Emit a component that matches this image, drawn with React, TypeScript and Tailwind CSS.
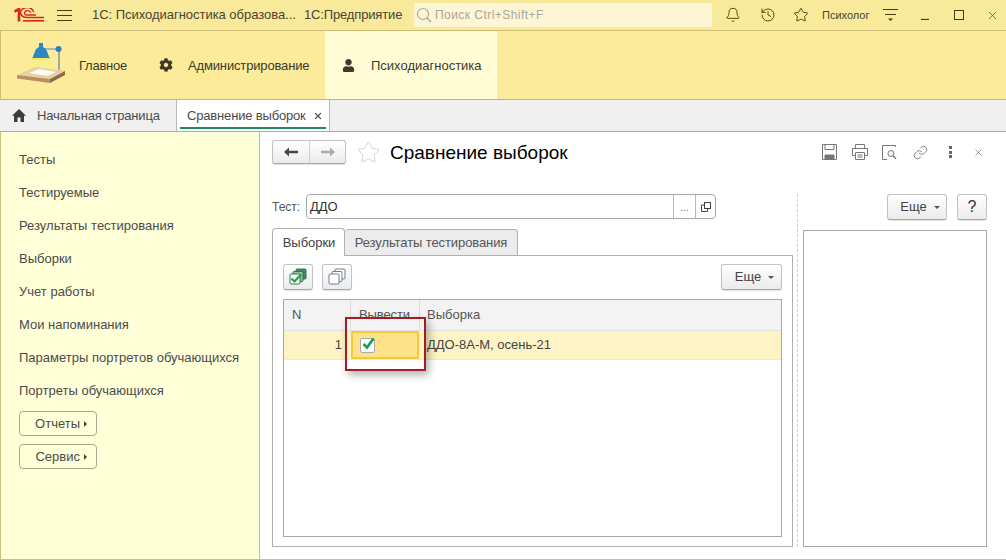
import React from "react";
import { Bell, History, Star, X, Link } from "lucide-react";
import { FaCog, FaUser } from "react-icons/fa";

const Logo = () => (
  <svg width="30" height="14" viewBox="0 0 30 14" fill="none" stroke="#d8261c">
    <path d="M0.5 3.5 L5 1 V13.5" strokeWidth="2.6" />
    <path d="M19.5 4 A6.5 5 0 1 0 13 9.5 H30" strokeWidth="1.5" />
    <path d="M16.5 4.8 A3 2.2 0 1 0 14 7 H22" strokeWidth="1.3" />
    <path d="M9 12.8 H30" strokeWidth="1.6" />
  </svg>
);

const Lamp = () => (
  <svg width="50" height="44" viewBox="0 0 50 44">
    <path d="M16 17 L7 31 L38 30 L33 17 Z" fill="#f8ef8e" />
    <path d="M1 33 L19 25 L49 29 L34 37 Z" fill="#e8cfa6" />
    <path d="M13 31 L23 27 L40 30 L31 34 Z" fill="#fffdf2" />
    <path d="M1 33 L34 37 V41 L1 36.5 Z" fill="#b88f63" />
    <path d="M34 37 L49 29 V33 L34 41 Z" fill="#8e6a48" />
    <path d="M28 7 H41" stroke="#aab6bd" strokeWidth="2" fill="none" />
    <path d="M43 9 V28" stroke="#7f93a0" strokeWidth="1.5" fill="none" />
    <circle cx="42.5" cy="7" r="3" fill="#2f7fb5" />
    <path d="M23 1 h4 v4 l3 2 l4 10 h-18 l4 -10 l3 -2 z" fill="#2f86c4" />
    <path d="M16 16 h18 l-1 2 h-16 z" fill="#f4ea5c" />
  </svg>
);

const MenuLines = () => (
  <svg width="15" height="13" viewBox="0 0 15 13" stroke="#4a3c12" strokeWidth="1">
    <path d="M0 1.5H15M0 6.5H15M0 11.5H15" />
  </svg>
);

const SideItem = ({ t }: { t: string }) => (
  <div className="h-[33px] flex items-center text-[13px] text-[#4b4b4b]">{t}</div>
);

const SideBtn = ({ t }: { t: string }) => (
  <div className="h-[25px] w-[78px] mb-[8px] rounded-[4px] border border-[#aaa88c] flex items-center justify-end pr-[9px] gap-[4px] text-[13px] text-[#4b4b4b]">
    <span>{t}</span>
    <span className="w-0 h-0 border-y-[3px] border-y-transparent border-l-[3px] border-l-[#444]" />
  </div>
);

const GrayBtn = ({ className, children }: { className: string; children: React.ReactNode }) => (
  <div className={"flex items-center justify-center rounded-[3px] border border-[#c2c2c2] border-b-[#a8a8a8] bg-gradient-to-b from-white to-[#ebebeb] shadow-[0_1px_1px_rgba(0,0,0,0.12)] " + className}>
    {children}
  </div>
);

const More = ({ className }: { className: string }) => (
  <GrayBtn className={"gap-[7px] pl-[6px] text-[13px] text-[#444] " + className}>
    <span>Еще</span>
    <span className="w-0 h-0 border-x-[3px] border-x-transparent border-t-[3px] border-t-[#555]" />
  </GrayBtn>
);

const CopyIcon = ({ green }: { green?: boolean }) => (
  <svg width="20" height="18" viewBox="0 0 20 18" fill="none">
    <rect x="8" y="1" width="10" height="10" rx="1" fill={green ? "#3d8a5a" : "#fff"} stroke={green ? "#3b7355" : "#6c7f8e"} />
    <rect x="5" y="3.5" width="10" height="10" rx="1" fill={green ? "#8cc29e" : "#fff"} stroke={green ? "#3b7355" : "#6c7f8e"} />
    <rect x="2" y="6" width="10" height="10" rx="1" fill="#fff" stroke={green ? "#3b7355" : "#6c7f8e"} />
    {green && <path d="M3.5 10.5 L6.5 13.5 L13 6.5" stroke="#25a244" strokeWidth="2.2" />}
  </svg>
);

const SaveIcon = () => (
  <svg width="15" height="16" viewBox="0 0 15 16" fill="none" stroke="#777">
    <path d="M0.5 0.5H14.5V15.5H0.5Z" />
    <path d="M3 0.5V5.5H12V0.5" />
    <path d="M3 11V15.5H12V11Z" fill="#777" />
  </svg>
);

const PrintIcon = () => (
  <svg width="16" height="16" viewBox="0 0 16 16" fill="none" stroke="#777">
    <path d="M3.5 4V0.5H12.5V4" />
    <path d="M3 11.5H0.5V4.5H15.5V11.5H13" />
    <path d="M3.5 8.5H12.5V15.5H3.5Z" />
    <path d="M5.5 11H10.5M5.5 13H10.5" />
  </svg>
);

const PreviewIcon = () => (
  <svg width="15" height="15" viewBox="0 0 15 15" fill="none" stroke="#777">
    <path d="M13.5 2V0.5H0.5V14.5H5" />
    <circle cx="9" cy="8.5" r="3" />
    <path d="M11.2 10.8 L14 13.8" strokeWidth="1.4" />
  </svg>
);

const HomeIcon = () => (
  <svg width="14" height="13" viewBox="0 0 14 13" fill="#3c3c3c">
    <path d="M0 6.8 L7 0 L14 6.8 H12 V13 H8.5 V8.5 H5.5 V13 H2 V6.8 Z" />
  </svg>
);

const Arrow = ({ color, flip }: { color: string; flip?: boolean }) => (
  <svg width="14" height="10" viewBox="0 0 14 10" fill={color} className={flip ? "-scale-x-100" : ""}>
    <path d="M0 5 L5 0.5 V3.8 H14 V6.2 H5 V9.5 Z" />
  </svg>
);

export default function App() {
  return (
    <div className="w-[1006px] h-[560px] overflow-hidden flex flex-col bg-white font-['Liberation_Sans',Arial,sans-serif]">
      {/* Title bar */}
      <div className="h-[31px] shrink-0 flex items-center bg-[#f9e99a] border-b border-[#cdbd75]">
        <div className="ml-[14px] w-[30px] h-[14px] flex"><Logo /></div>
        <div className="ml-[13px]"><MenuLines /></div>
        <span className="ml-[20px] text-[13px] tracking-[-0.03px] text-[#4a4432] w-[212px] whitespace-nowrap">1С: Психодиагностика образова...</span>
        <span className="text-[13px] tracking-[-0.15px] text-[#4a4432] w-[110px] whitespace-nowrap">1С:Предприятие</span>
        <div className="w-[298px] h-[24px] bg-[#fdf5d4] flex items-center pl-[2px] gap-[3px]">
          <svg width="16" height="16" viewBox="0 0 16 16" fill="none" stroke="#a8a8a0" strokeWidth="1.2">
            <circle cx="7" cy="7" r="5.5" />
            <path d="M11 11 L15 15" />
          </svg>
          <span className="text-[12px] tracking-[0.45px] text-[#aaa89c]">Поиск Ctrl+Shift+F</span>
        </div>
        <Bell className="ml-[13px]" size={16} strokeWidth={1.4} color="#4a3c12" />
        <History className="ml-[19px]" size={16} strokeWidth={1.4} color="#4a3c12" />
        <Star className="ml-[17px]" size={16} strokeWidth={1.4} color="#4a3c12" />
        <span className="ml-[13px] text-[11px] w-[47px] text-[#4a4432] whitespace-nowrap">Психолог</span>
        <svg className="ml-[14px]" width="15" height="14" viewBox="0 0 15 14" fill="#4a3c12" stroke="#4a3c12" strokeWidth="1">
          <path d="M0 1.5H15M2 6.5H13" />
          <path d="M5 10.5 H10 L7.5 13 Z" stroke="none" />
        </svg>
        <svg className="ml-[22px]" width="10" height="10" viewBox="0 0 10 10" stroke="#4a3c12" strokeWidth="1.2"><path d="M1 9.5H9" /></svg>
        <div className="ml-[24px] w-[10px] h-[10px] border border-[#4a3c12]" />
        <X className="ml-[22px]" size={13} strokeWidth={1.2} color="#4a3c12" />
      </div>

      {/* Section bar */}
      <div className="h-[69px] shrink-0 flex items-center bg-[#fbeb9b] border-b border-[#bfb383] border-l border-l-[#cdbd75]">
        <div className="ml-[15px] w-[50px] h-[44px] mt-[-3px]"><Lamp /></div>
        <span className="ml-[13px] w-[80px] text-[13px] tracking-[-0.25px] pt-[2px] text-[#3d3a2c]">Главное</span>
        <FaCog size={14} color="#3f3a28" />
        <span className="ml-[15px] w-[137px] text-[13px] tracking-[-0.15px] pt-[2px] text-[#3d3a2c] whitespace-nowrap">Администрирование</span>
        <div className="h-full flex items-center bg-[#fffcd6] pl-[17px] w-[172px]">
          <FaUser size={13} color="#3f3a28" />
          <span className="ml-[16px] text-[13px] pt-[2px] text-[#3d3a2c]">Психодиагностика</span>
        </div>
      </div>

      {/* Open tabs */}
      <div className="h-[32px] shrink-0 flex bg-[#f0f0f0] border-b border-[#a9a9a9]">
        <div className="w-[177px] flex items-center pl-[12px] gap-[11px] border-r border-[#b8b8b8]">
          <HomeIcon />
          <span className="text-[13px] tracking-[-0.17px] text-[#4b4b4b] whitespace-nowrap">Начальная страница</span>
        </div>
        <div className="relative w-[153px] flex items-center pl-[10px] gap-[7px] bg-white border-r border-[#b8b8b8]">
          <span className="text-[13px] tracking-[-0.17px] text-[#4b4b4b] whitespace-nowrap">Сравнение выборок</span>
          <X size={10} strokeWidth={3} color="#555" />
          <div className="absolute left-[3px] right-[3px] bottom-[2px] h-[2px] bg-[#1f8a5c]" />
        </div>
      </div>

      {/* Body */}
      <div className="flex-1 min-h-0 flex border-b border-[#c9c27c]">
        <aside className="w-[260px] shrink-0 bg-[#ffffd8] border-r border-[#c9c27c] border-l border-l-[#c9c27c] pl-[18px] pt-[11px]">
          {["Тесты", "Тестируемые", "Результаты тестирования", "Выборки", "Учет работы", "Мои напоминания", "Параметры портретов обучающихся", "Портреты обучающихся"].map((t) => (
            <SideItem key={t} t={t} />
          ))}
          <div className="mt-[4px]">
            <SideBtn t="Отчеты" />
            <SideBtn t="Сервис" />
          </div>
        </aside>

        <main className="flex-1 min-w-0 flex flex-col pl-[12px] pr-[19px]">
          {/* Form header */}
          <div className="h-[62px] shrink-0 flex items-start pt-[8px]">
            <div className="w-[74px] h-[24px] flex rounded-[3px] border border-[#c2c2c2] border-b-[#a8a8a8] bg-gradient-to-b from-white to-[#ebebeb] shadow-[0_1px_1px_rgba(0,0,0,0.12)]">
              <div className="w-[37px] flex items-center justify-center border-r border-[#d0d0d0]"><Arrow color="#444" /></div>
              <div className="flex-1 flex items-center justify-center"><Arrow color="#aaa" flip /></div>
            </div>
            <Star className="ml-[10px]" size={25} strokeWidth={0.7} color="#c4c4c4" />
            <h1 className="ml-[9px] text-[19px] leading-[26px] text-black whitespace-nowrap">Сравнение выборок</h1>
            <div className="ml-auto flex items-center h-[24px] pr-[3px]">
              <SaveIcon />
              <div className="ml-[15px]"><PrintIcon /></div>
              <div className="ml-[14px]"><PreviewIcon /></div>
              <Link className="ml-[16px]" size={15} strokeWidth={1.3} color="#666" />
              <div className="ml-[21px] flex flex-col gap-[1.5px]">
                <span className="w-[3px] h-[3px] bg-[#666]" />
                <span className="w-[3px] h-[3px] bg-[#666]" />
                <span className="w-[3px] h-[3px] bg-[#666]" />
              </div>
              <X className="ml-[21px]" size={11} strokeWidth={1.2} color="#555" />
            </div>
          </div>

          <div className="flex-1 min-h-0 flex pb-[12px]">
            {/* Left form column */}
            <div className="w-[521px] shrink-0 flex flex-col">
              <div className="h-[25px] flex items-center shrink-0">
                <span className="w-[34px] text-[12px] text-[#555]">Тест:</span>
                <div className="w-[410px] h-[25px] rounded-[4px] border border-[#a8a8a8] flex items-center">
                  <span className="flex-1 pl-[3px] text-[13px] text-[#333]">ДДО</span>
                  <span className="w-[22px] h-full border-l border-[#b8b8b8] flex items-end justify-center pb-[5px] text-[10px] leading-none text-[#666]">...</span>
                  <span className="w-[20px] h-full border-l border-[#b8b8b8] flex items-center justify-center">
                    <svg width="10" height="10" viewBox="0 0 10 10" fill="none" stroke="#444">
                      <rect x="3.5" y="0.5" width="6" height="6" />
                      <path d="M3 3H0.5V9.5H6.5V7" />
                    </svg>
                  </span>
                </div>
              </div>

              <div className="h-[28px] mt-[9px] -mb-px shrink-0 flex items-start relative z-10">
                <div className="w-[73px] h-[28px] pl-px rounded-t-[4px] border border-[#b0b0b0] border-b-0 bg-white flex items-center justify-center text-[13px] tracking-[-0.05px] text-[#444]">Выборки</div>
                <div className="w-[173px] h-[27px] mt-px rounded-t-[4px] border border-l-0 border-[#b0b0b0] bg-[#ececec] flex items-center justify-center text-[13px] tracking-[-0.1px] text-[#555] whitespace-nowrap">Результаты тестирования</div>
              </div>

              <div className="flex-1 min-h-0 flex flex-col border border-[#b0b0b0] px-[10px] pt-[8px] pb-[9px]">
                <div className="h-[26px] shrink-0 flex">
                  <GrayBtn className="w-[30px]"><CopyIcon green /></GrayBtn>
                  <GrayBtn className="w-[30px] ml-[9px]"><CopyIcon /></GrayBtn>
                  <More className="ml-auto w-[61px]" />
                </div>
                <div className="relative flex-1 min-h-0 mt-[9px] border border-[#a8a8a8] flex flex-col">
                  <div className="h-[31px] shrink-0 flex bg-[#f3f3f3] text-[13px] text-[#555] border-b border-[#e2e2e2]">
                    <div className="w-[67px] pl-[8px] flex items-center border-r border-[#dcdcdc]">N</div>
                    <div className="w-[69px] pl-[8px] flex items-center border-r border-[#dcdcdc] tracking-[-0.1px]">Вывести</div>
                    <div className="flex-1 pl-[7px] flex items-center">Выборка</div>
                  </div>
                  <div className="h-[29px] shrink-0 flex items-stretch bg-[#fdf3c4] border-b border-[#e8e8e8] text-[13px] text-[#444]">
                    <div className="w-[67px] flex items-center justify-end pr-[9px]">1</div>
                    <div className="w-[68px] bg-[#fde28a] border-2 border-[#f6c83c] flex items-center pl-[7px]">
                      <div className="relative w-[15px] h-[15px] rounded-[2px] border border-[#a9a9a9] bg-white">
                        <svg className="absolute left-0 top-[-3px]" width="15" height="15" viewBox="0 0 15 15" fill="none" stroke="#12a052" strokeWidth="2.6">
                          <path d="M2.5 8 L6 11.5 L12.5 2.5" />
                        </svg>
                      </div>
                    </div>
                    <div className="flex-1 pl-[8px] flex items-center">ДДО-8А-М, осень-21</div>
                  </div>
                  <div className="absolute left-[61px] top-[17px] w-[81px] h-[54px] border-2 border-[#a31d22] shadow-[3px_4px_8px_rgba(0,0,0,0.3)]" />
                </div>
              </div>
            </div>

            {/* Splitter */}
            <div className="w-[1px] ml-[4px] border-l border-dashed border-[#cfcfcf] shrink-0" />

            {/* Right column */}
            <div className="ml-[5px] flex-1 min-w-0 flex flex-col">
              <div className="h-[26px] shrink-0 flex justify-end gap-[10px]">
                <More className="w-[60px]" />
                <GrayBtn className="w-[30px] text-[16px] text-[#333]">?</GrayBtn>
              </div>
              <div className="mt-[10px] flex-1 min-h-0 border border-[#a8a8a8]" />
            </div>
          </div>
        </main>
      </div>
    </div>
  );
}
